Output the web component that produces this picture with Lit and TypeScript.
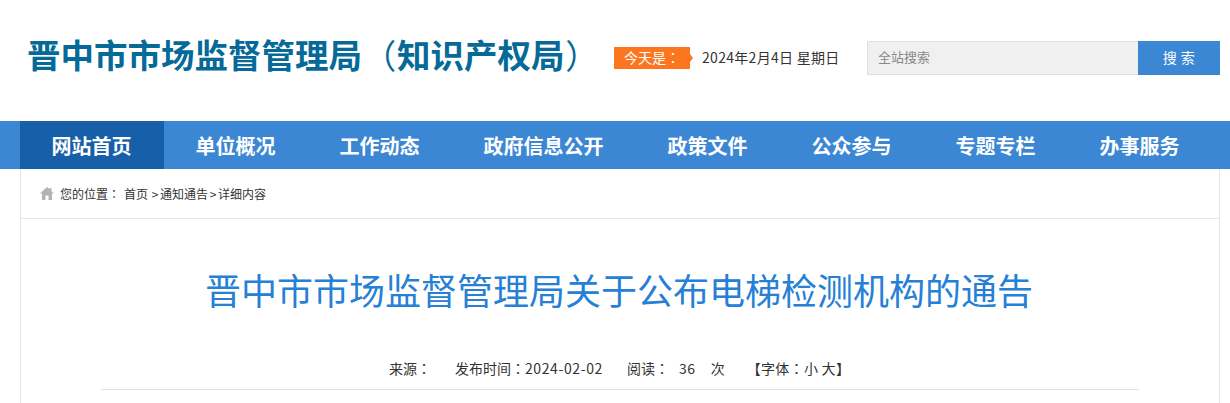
import { LitElement, html, css } from 'lit';
import { customElement } from 'lit/decorators.js';

const NAV = ['网站首页', '单位概况', '工作动态', '政府信息公开', '政策文件', '公众参与', '专题专栏', '办事服务'];

@customElement('app-root')
export class AppRoot extends LitElement {
  static styles = css`
    :host {
      display: block;
      height: 403px;
      overflow: hidden;
      background: #fff;
      color: #333;
      font-family: 'Noto Sans CJK SC', 'Liberation Sans', sans-serif;
    }

    /* TC has its full-width punctuation centred in the box, as in the reference */
    .p {
      font-family: 'Noto Sans CJK TC', 'Noto Sans CJK SC', sans-serif;
    }

    .wrap {
      width: 1200px;
      margin: 0 0 0 20px;
    }

    .header {
      height: 121px;
      display: flex;
      align-items: flex-start;
    }

    .site-title {
      margin: 31px 0 0 7px;
      width: 587px;
      font-size: 33.5px;
      line-height: 46px;
      font-weight: 700;
      color: #056a97;
      white-space: nowrap;
    }

    .site-title .p {
      display: inline-block;
      width: 35px;
      font-weight: 400;
      text-align: center;
    }

    .today {
      position: relative;
      margin-top: 47px;
      width: 76px;
      height: 22px;
      background: #fc761f;
      color: #fff;
      font-size: 14px;
      line-height: 21px;
      text-align: center;
    }

    .today::after {
      content: '';
      position: absolute;
      left: 76px;
      top: 7px;
      border-left: 3px solid #fc761f;
      border-top: 4px solid transparent;
      border-bottom: 4px solid transparent;
    }

    .date {
      margin: 47px 0 0 12px;
      width: 165px;
      font-size: 14px;
      line-height: 21px;
      letter-spacing: 0.3px;
      color: #333;
      white-space: nowrap;
    }

    .search {
      margin-top: 41px;
      display: flex;
      height: 34px;
    }

    .search .input {
      box-sizing: border-box;
      width: 271px;
      height: 34px;
      padding-left: 10px;
      border: 1px solid #e0e0e0;
      border-right: none;
      background: #f0f0f0;
      color: #888;
      font-size: 13px;
      line-height: 30px;
    }

    .search .btn {
      width: 82px;
      background: #3b87d4;
      color: #fff;
      font-size: 14px;
      line-height: 33px;
      text-align: center;
      letter-spacing: 0.5px;
    }

    .nav {
      background: #3b87d4;
      height: 48px;
    }

    .nav ul {
      display: flex;
      margin: 0 0 0 20px;
      padding: 0;
      list-style: none;
    }

    .nav li {
      height: 48px;
      padding: 0 32.5px 0 31.5px;
      font-size: 20px;
      font-weight: 700;
      line-height: 49px;
      color: #fff;
      white-space: nowrap;
    }

    .nav li.active {
      background: #175fa9;
    }

    .panel {
      box-sizing: border-box;
      height: 234px;
      border: 1px solid #e6e6e6;
      border-top: none;
      border-bottom: none;
    }

    .crumbs {
      box-sizing: border-box;
      height: 50px;
      padding-left: 19px;
      border-bottom: 1px solid #e6e6e6;
      display: flex;
      align-items: center;
      font-size: 12px;
      color: #333;
    }

    .crumbs svg {
      width: 14px;
      height: 13px;
      margin-right: 6px;
    }

    .crumbs .here {
      margin-right: 4px;
    }

    .crumbs .gt {
      width: 10px;
      text-align: center;
    }

    .crumbs .gt.first {
      margin-left: 2px;
    }

    h1 {
      margin: 44px 0 0;
      padding-right: 2px;
      font-size: 36px;
      line-height: 52px;
      font-weight: 400;
      color: #2580d6;
      text-align: center;
      white-space: nowrap;
    }

    .meta {
      margin: 41px 80px 0;
      height: 33px;
      padding-left: 288px;
      border-bottom: 1px solid #e0e0e0;
      display: flex;
      font-size: 14px;
      line-height: 24px;
      color: #333;
      white-space: nowrap;
    }

    .meta .digits {
      letter-spacing: 0.6px;
    }

    .meta .from {
      margin-right: 24px;
    }

    .meta .published {
      margin-right: 24px;
    }

    .meta .count {
      margin: 0 15px 0 10px;
    }

    .meta .size {
      margin-left: 22px;
      letter-spacing: 0.3px;
    }
  `;

  render() {
    return html`
      <div class="wrap header">
        <div class="site-title">晋中市市场监督管理局<span class="p">（</span>知识产权局<span class="p">）</span></div>
        <div class="today">今天是<span class="p">：</span></div>
        <div class="date">2024年2月4日 星期日</div>
        <div class="search">
          <div class="input">全站搜索</div>
          <div class="btn">搜 索</div>
        </div>
      </div>
      <nav class="nav">
        <ul>
          ${NAV.map((n, i) => html`<li class=${i === 0 ? 'active' : ''}>${n}</li>`)}
        </ul>
      </nav>
      <div class="wrap panel">
        <div class="crumbs">
          <svg viewBox="0 0 14 13"><path fill="#b3b3b3" d="M7 0 0 6.5h2V13h3.5V8.5h3V13H12V6.5h2L11.5 4V1h-2v1.2z" /></svg>
          <span class="here">您的位置<span class="p">：</span></span>
          <span>首页</span><span class="gt first">&gt;</span><span>通知通告</span><span class="gt">&gt;</span><span>详细内容</span>
        </div>
        <h1>晋中市市场监督管理局关于公布电梯检测机构的通告</h1>
        <div class="meta">
          <span class="from">来源<span class="p">：</span></span>
          <span class="published">发布时间<span class="p">：</span><span class="digits">2024-02-02</span></span>
          <span>阅读<span class="p">：</span></span>
          <span class="count digits">36</span>
          <span>次</span>
          <span class="size"><span class="p">【</span>字体<span class="p">：</span>小 大<span class="p">】</span></span>
        </div>
      </div>
    `;
  }
}
